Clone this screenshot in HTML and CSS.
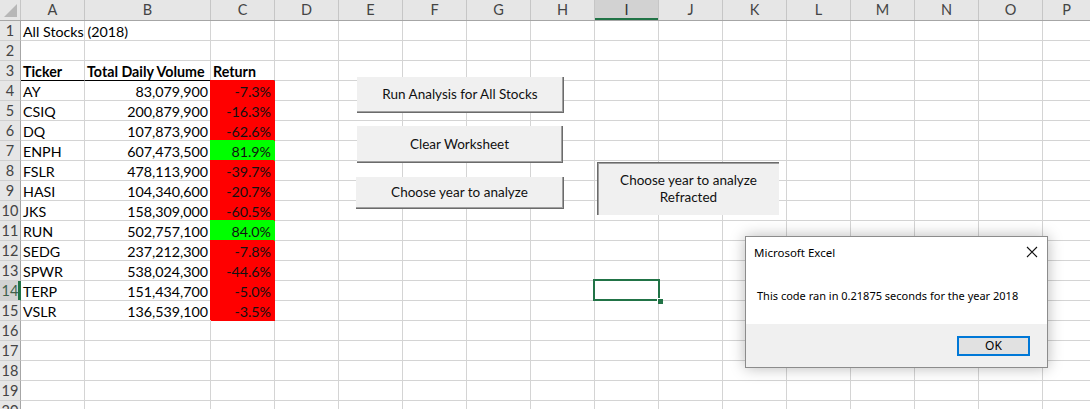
FILE: index.html
```html
<!DOCTYPE html>
<html>
<head>
<meta charset="utf-8">
<link rel="stylesheet" href="styles.css">
</head>
<body>
<div class="sheet">
  <div class="hrow">
    <div class="corner"><span class="tri"></span></div>
    <div class="ch wa">A</div>
    <div class="ch wb">B</div>
    <div class="ch wa">C</div>
    <div class="ch wa">D</div>
    <div class="ch wa">E</div>
    <div class="ch wa">F</div>
    <div class="ch wa">G</div>
    <div class="ch wa">H</div>
    <div class="ch wa sel">I</div>
    <div class="ch wa">J</div>
    <div class="ch wa">K</div>
    <div class="ch wa">L</div>
    <div class="ch wa">M</div>
    <div class="ch wa">N</div>
    <div class="ch wa">O</div>
    <div class="ch wp">P</div>
  </div>

  <div class="row"><div class="rh">1</div><div class="cell ca nowrap">All Stocks (2018)</div><div class="cell cb"></div><div class="cell cc"></div><div class="rest"></div></div>
  <div class="row"><div class="rh">2</div><div class="cell ca"></div><div class="cell cb"></div><div class="cell cc"></div><div class="rest"></div></div>
  <div class="row"><div class="rh">3</div><div class="cell ca bold under">Ticker</div><div class="cell cb bold under">Total Daily Volume</div><div class="cell cc bold under left">Return</div><div class="rest"></div></div>
  <div class="row"><div class="rh">4</div><div class="cell ca">AY</div><div class="cell cb num">83,079,900</div><div class="cell cc num red">-7.3%</div><div class="rest"></div></div>
  <div class="row"><div class="rh">5</div><div class="cell ca">CSIQ</div><div class="cell cb num">200,879,900</div><div class="cell cc num red">-16.3%</div><div class="rest"></div></div>
  <div class="row"><div class="rh">6</div><div class="cell ca">DQ</div><div class="cell cb num">107,873,900</div><div class="cell cc num red">-62.6%</div><div class="rest"></div></div>
  <div class="row"><div class="rh">7</div><div class="cell ca">ENPH</div><div class="cell cb num">607,473,500</div><div class="cell cc num green">81.9%</div><div class="rest"></div></div>
  <div class="row"><div class="rh">8</div><div class="cell ca">FSLR</div><div class="cell cb num">478,113,900</div><div class="cell cc num red">-39.7%</div><div class="rest"></div></div>
  <div class="row"><div class="rh">9</div><div class="cell ca">HASI</div><div class="cell cb num">104,340,600</div><div class="cell cc num red">-20.7%</div><div class="rest"></div></div>
  <div class="row"><div class="rh">10</div><div class="cell ca">JKS</div><div class="cell cb num">158,309,000</div><div class="cell cc num red">-60.5%</div><div class="rest"></div></div>
  <div class="row"><div class="rh">11</div><div class="cell ca">RUN</div><div class="cell cb num">502,757,100</div><div class="cell cc num green">84.0%</div><div class="rest"></div></div>
  <div class="row"><div class="rh">12</div><div class="cell ca">SEDG</div><div class="cell cb num">237,212,300</div><div class="cell cc num red">-7.8%</div><div class="rest"></div></div>
  <div class="row"><div class="rh">13</div><div class="cell ca">SPWR</div><div class="cell cb num">538,024,300</div><div class="cell cc num red">-44.6%</div><div class="rest"></div></div>
  <div class="row"><div class="rh rsel">14</div><div class="cell ca">TERP</div><div class="cell cb num">151,434,700</div><div class="cell cc num red">-5.0%</div><div class="rest"></div></div>
  <div class="row"><div class="rh">15</div><div class="cell ca">VSLR</div><div class="cell cb num">136,539,100</div><div class="cell cc num red">-3.5%</div><div class="rest"></div></div>
  <div class="row"><div class="rh">16</div><div class="cell ca"></div><div class="cell cb"></div><div class="cell cc"></div><div class="rest"></div></div>
  <div class="row"><div class="rh">17</div><div class="cell ca"></div><div class="cell cb"></div><div class="cell cc"></div><div class="rest"></div></div>
  <div class="row"><div class="rh">18</div><div class="cell ca"></div><div class="cell cb"></div><div class="cell cc"></div><div class="rest"></div></div>
  <div class="row"><div class="rh">19</div><div class="cell ca"></div><div class="cell cb"></div><div class="cell cc"></div><div class="rest"></div></div>
  <div class="row"><div class="rh">20</div><div class="cell ca"></div><div class="cell cb"></div><div class="cell cc"></div><div class="rest"></div></div>

  <div class="btn btn1">Run Analysis for All Stocks</div>
  <div class="btn btn2">Clear Worksheet</div>
  <div class="btn btn3">Choose year to analyze</div>
  <div class="btn btn4">Choose year to analyze<br>Refracted</div>

  <div class="selbox"><span class="handle"></span></div>

  <div class="dialog">
    <div class="dlg-top">
      <div class="dlg-title">
        <span>Microsoft Excel</span>
        <svg class="dlg-x" width="12" height="12" viewBox="0 0 12 12"><path d="M1 1 L11 11 M11 1 L1 11" stroke="#111" stroke-width="1.1" fill="none"/></svg>
      </div>
      <div class="dlg-msg">This code ran in 0.21875 seconds for the year 2018</div>
    </div>
    <div class="dlg-foot">
      <div class="okbtn">OK</div>
    </div>
  </div>
</div>
</body>
</html>
```
FILE: styles.css
```css
html, body {
  margin: 0;
  padding: 0;
  background: #fff;
  overflow: hidden;
}
.sheet {
  position: relative;
  width: 1090px;
  height: 409px;
  overflow: hidden;
  font-family: "Lato", "Liberation Sans", sans-serif;
  font-size: 14.25px;
  color: #000;
}
.hrow {
  display: flex;
  height: 20px;
  border-bottom: 1px solid #a6a6a6;
  background: #e6e6e6;
}
.corner {
  position: relative;
  width: 20px;
  border-right: 1px solid #c6c6c6;
}
.tri {
  position: absolute;
  right: 3px;
  bottom: 3px;
  width: 0;
  height: 0;
  border-left: 13px solid transparent;
  border-bottom: 13px solid #b7b7b7;
}
.ch {
  box-sizing: border-box;
  border-right: 1px solid #c6c6c6;
  text-align: center;
  line-height: 20px;
  color: #444;
  font-size: 14.5px;
}
.wa { width: 64px; }
.wb { width: 126px; }
.wp { flex: 1; border-right: none; }
.ch.sel {
  background: #d2d2d2;
  box-shadow: inset 0 -2px 0 #217346;
  color: #333;
}
.row {
  display: flex;
  height: 20px;
}
.rh {
  box-sizing: border-box;
  width: 21px;
  height: 20px;
  background: #e6e6e6;
  border-right: 1px solid #a6a6a6;
  border-bottom: 1px solid #d0d0d0;
  text-align: center;
  line-height: 20px;
  color: #444;
  font-size: 14.5px;
}
.rh.rsel {
  background: #d2d2d2;
  box-shadow: inset -2px 0 0 #217346;
  border-right-color: #217346;
  color: #3f5f4a;
}
.cell {
  box-sizing: border-box;
  height: 20px;
  border-right: 1px solid #d4d4d4;
  border-bottom: 1px solid #d4d4d4;
  padding: 1px 2px 0 2px;
  line-height: 19px;
  white-space: nowrap;
}
.ca { width: 64px; }
.cb { width: 126px; }
.cc { width: 64px; }
.nowrap { overflow: visible; position: relative; z-index: 1; }
.bold { font-weight: bold; }
.under { border-bottom-color: #000; }
.num { text-align: right; }
.cc.num { padding-right: 3px; }
.red {
  background: #ff0000;
  border-color: #ff0000;
  box-shadow: -1px -1px 0 0 #ff0000;
  color: #111;
}
.green {
  background: #00ff00;
  border-color: #00ff00;
  box-shadow: -1px -1px 0 0 #00ff00;
  color: #111;
}
.rest {
  flex: 1;
  height: 20px;
  box-sizing: border-box;
  border-bottom: 1px solid #d4d4d4;
  background: repeating-linear-gradient(to right, transparent 0 63px, #d4d4d4 63px 64px);
}

/* floating form buttons */
.btn {
  position: absolute;
  box-sizing: border-box;
  background: #f0f0f0;
  display: flex;
  align-items: center;
  justify-content: center;
  text-align: center;
  font-size: 13.5px;
  line-height: 17px;
  color: #111;
  border-right: 1px solid #6b6b6b;
  border-bottom: 1px solid #6b6b6b;
  box-shadow: inset -1px -1px 0 #a0a0a0;
}
.btn1 { left: 357px; top: 77px; width: 207px; height: 36px; }
.btn2 { left: 357px; top: 126px; width: 206px; height: 37px; }
.btn3 { left: 356px; top: 177px; width: 208px; height: 32px; }
.btn4 {
  left: 597px; top: 162px; width: 182px; height: 53px;
  border: none;
  border-top: 1px solid #6b6b6b;
  border-left: 1px solid #6b6b6b;
  box-shadow: inset 1px 1px 0 #a0a0a0;
}

/* selected cell */
.selbox {
  position: absolute;
  left: 593px;
  top: 279px;
  width: 63px;
  height: 18px;
  border: 2px solid #217346;
}
.handle {
  position: absolute;
  right: -5px;
  bottom: -5px;
  width: 5px;
  height: 5px;
  background: #217346;
  border: 1px solid #fff;
  border-width: 1px 0 0 1px;
}

/* message box */
.dialog {
  position: absolute;
  left: 745px;
  top: 236px;
  width: 301px;
  border: 1px solid #8c8c8c;
  background: #fff;
  box-shadow: 0 0 14px rgba(0,0,0,0.28);
  font-family: "Noto Sans", "Open Sans", sans-serif;
  font-size: 11px;
  color: #000;
  display: flex;
  flex-direction: column;
}
.dlg-top {
  height: 87px;
  background: #fff;
}
.dlg-title {
  height: 30px;
  display: flex;
  align-items: center;
  justify-content: space-between;
  padding: 0 9px 0 8px;
  font-size: 11.5px;
}
.dlg-x { display: block; }
.dlg-msg {
  margin-top: 21px;
  padding-left: 11px;
  line-height: 16px;
  white-space: nowrap;
}
.dlg-foot {
  height: 43px;
  background: #f0f0f0;
  display: flex;
  justify-content: flex-end;
  align-items: flex-start;
  padding-right: 17px;
}
.okbtn {
  margin-top: 12px;
  box-sizing: border-box;
  width: 73px;
  height: 20px;
  border: 2px solid #0078d7;
  background: #e1e1e1;
  text-align: center;
  line-height: 16px;
  font-size: 12px;
}
```
